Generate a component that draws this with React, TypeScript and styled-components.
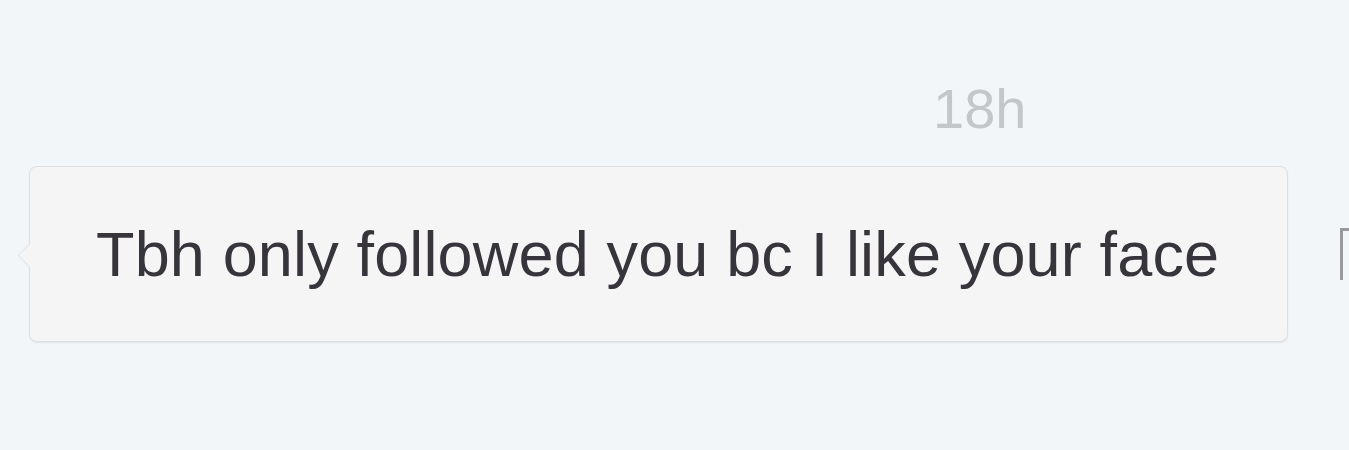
import React from "react";
import styled, { createGlobalStyle } from "styled-components";

const Global = createGlobalStyle`
  html, body {
    margin: 0;
    padding: 0;
    background: #f3f6f9;
    overflow: hidden;
  }
  body {
    font-family: "Liberation Sans", Arial, sans-serif;
  }
`;

const Page = styled.div`
  width: 1349px;
  height: 450px;
  box-sizing: border-box;
  padding: 77px 0 0 29px;
  display: flex;
  flex-direction: column;
  gap: 25px;
`;

const Timestamp = styled.div`
  margin-left: 904px;
  font-size: 56px;
  line-height: 64px;
  color: #c4c6c8;
`;

const Row = styled.div`
  display: flex;
  align-items: center;
  gap: 50px;
`;

const Bubble = styled.div`
  position: relative;
  flex: none;
  background: #f6f5f5;
  border: 1px solid #dfdfe0;
  border-radius: 8px;
  box-shadow: 0 1px 2px rgba(0, 0, 0, 0.07);
  padding: 51px 68px 51px 66px;
  font-size: 63px;
  line-height: 72px;
  letter-spacing: 0.15px;
  color: #37343b;
  white-space: nowrap;

  &::before {
    content: "";
    position: absolute;
    left: -9px;
    top: 80px;
    width: 16px;
    height: 16px;
    background: #f6f5f5;
    border-left: 1px solid #e4e4e6;
    border-bottom: 1px solid #e4e4e6;
    transform: rotate(45deg);
  }
`;

const SideIcon = styled.svg`
  flex: none;
  display: block;
`;

export default function App() {
  return (
    <>
      <Global />
      <Page>
        <Timestamp>18h</Timestamp>
        <Row>
          <Bubble>Tbh only followed you bc I like your face</Bubble>
          <SideIcon width="20" height="60" viewBox="0 0 20 60">
            <path d="M2 4 H14 V7 H5 V56 H2 Z" fill="#9a9a9c" />
          </SideIcon>
        </Row>
      </Page>
    </>
  );
}
